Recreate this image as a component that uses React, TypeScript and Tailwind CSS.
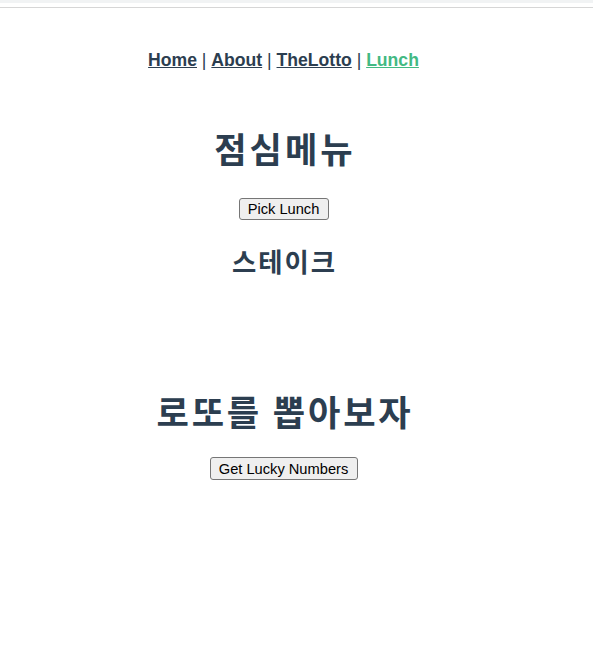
import React from "react";

export default function App() {
  const cjk = { fontFamily: '"Noto Sans CJK KR", "Noto Sans", sans-serif' };
  return (
    <div className="w-[593px] min-h-[661px] bg-white">
      <div className="h-[3px] bg-[#f1f3f4]" />
      <div className="h-[4px]" />
      <div className="h-px bg-[#d6d6d6]" />
      <div className="w-[567px] text-center text-[#2c3e50] font-['Liberation_Sans',Arial,sans-serif]">
        <nav className="mt-[42px] text-[17.6px] leading-[20px]">
          <a href="#" className="font-bold underline text-[#2c3e50]">Home</a>
          {" | "}
          <a href="#" className="font-bold underline text-[#2c3e50]">About</a>
          {" | "}
          <a href="#" className="font-bold underline text-[#2c3e50]">TheLotto</a>
          {" | "}
          <a href="#" className="font-bold underline text-[#42b983]">Lunch</a>
        </nav>
        <h1 className="mt-[58px] pl-[3px] text-[35.2px] leading-[40px] font-bold tracking-[3px]" style={cjk}>
          점심메뉴
        </h1>
        <div className="mt-[30px] flex justify-center">
          <button className="w-[90px] h-[22px] border border-[#767676] rounded-[3px] bg-[#efefef] text-[14.67px] leading-[18px] text-black font-['Liberation_Sans',Arial,sans-serif]">
            Pick Lunch
          </button>
        </div>
        <h2 className="mt-[26px] pl-[2px] text-[26.4px] leading-[30px] font-bold tracking-[2px]" style={cjk}>
          스테이크
        </h2>
        <h1 className="mt-[115px] pl-[3px] text-[35.2px] leading-[40px] font-bold tracking-[2.8px]" style={cjk}>
          로또를 뽑아보자
        </h1>
        <div className="mt-[26px] flex justify-center">
          <button className="w-[148px] h-[23px] border border-[#767676] rounded-[3px] bg-[#efefef] text-[14.67px] leading-[18px] text-black font-['Liberation_Sans',Arial,sans-serif]">
            Get Lucky Numbers
          </button>
        </div>
      </div>
    </div>
  );
}
